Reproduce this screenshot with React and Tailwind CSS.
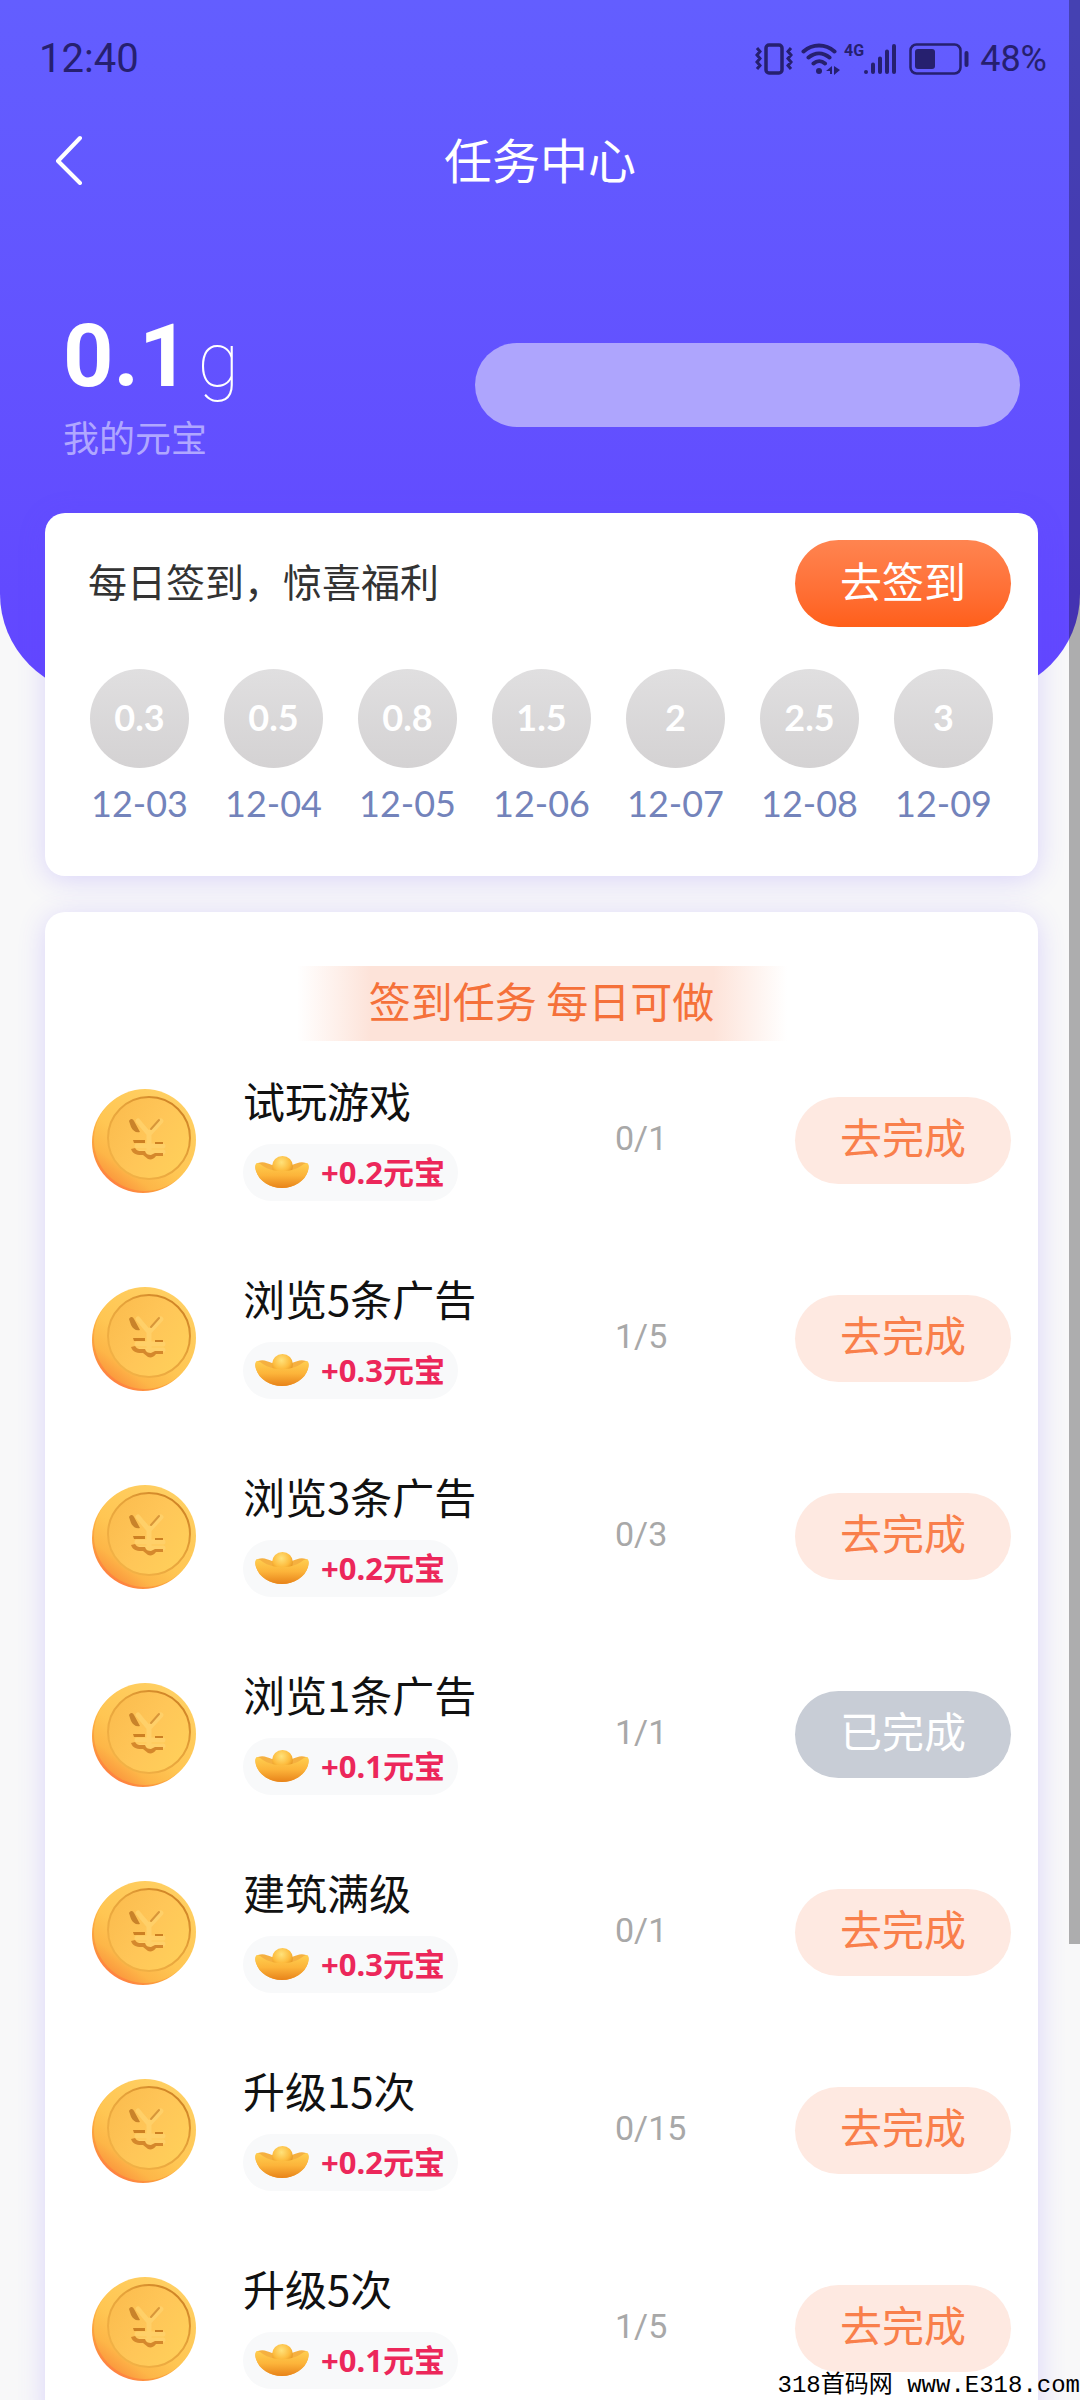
import React from 'react';
import clsx from 'clsx';

const signDays = [
    { date: '12-03', reward: '0.3' },
    { date: '12-04', reward: '0.5' },
    { date: '12-05', reward: '0.8' },
    { date: '12-06', reward: '1.5' },
    { date: '12-07', reward: '2' },
    { date: '12-08', reward: '2.5' },
    { date: '12-09', reward: '3' },
];

const tasks = [
    { name: '试玩游戏', reward: '0.2', progress: '0/1' },
    { name: '浏览5条广告', reward: '0.3', progress: '1/5' },
    { name: '浏览3条广告', reward: '0.2', progress: '0/3' },
    { name: '浏览1条广告', reward: '0.1', progress: '1/1', done: true },
    { name: '建筑满级', reward: '0.3', progress: '0/1' },
    { name: '升级15次', reward: '0.2', progress: '0/15' },
    { name: '升级5次', reward: '0.1', progress: '1/5' },
];

function StatusBar() {
    return (
        <div className="flex h-[118px] items-center justify-between pr-[33px] pl-[39px] font-[Roboto,sans-serif] text-[#26206f]">
            <span className="text-[40px]">12:40</span>
            <div className="flex items-center">
                {/* vibrate */}
                <svg className="mr-2" width="38" height="32" viewBox="0 0 38 32" fill="none" stroke="currentColor" strokeWidth="3">
                    <rect x="11" y="2" width="16" height="28" rx="3" strokeWidth="3.5" />
                    <path d="M2 5l3 3.5-3 3.5 3 3.5-3 3.5 3 3.5-3 3.5M36 5l-3 3.5 3 3.5-3 3.5 3 3.5-3 3.5 3 3.5" />
                </svg>
                {/* wifi */}
                <svg className="mr-1" width="39" height="32" viewBox="0 0 39 32" fill="none" stroke="currentColor" strokeWidth="4" strokeLinecap="round">
                    <path d="M2.500 8.500C11.500 .5 24.500 .5 33.500 8.500M7.500 14.500c6.500-5.500 14.500-5.500 21 0M12.500 20.500c3.500-3 8-3 11.500 0" />
                    <circle cx="18" cy="28" r="3" fill="currentColor" stroke="none" />
                    <path d="M25 28l6-5v8h-2v-3zM33 23v9l6-5z" fill="currentColor" stroke="none" />
                </svg>
                <span className="h-8 text-[16px] leading-[16px] font-bold">4G</span>
                {/* signal */}
                <svg className="mr-3" width="33" height="32" viewBox="0 0 33 32" fill="none" stroke="currentColor" strokeWidth="4" strokeLinecap="round">
                    <path d="M2 29v0M9 21.500V29M16 15.500V29M23 8.500V29M30 3V29" />
                </svg>
                {/* battery */}
                <svg className="mr-[11px]" width="60" height="32" viewBox="0 0 60 32" fill="none" stroke="currentColor">
                    <rect x="1.500" y="1.500" width="50" height="29" rx="6" strokeWidth="2.500" />
                    <rect x="6" y="6" width="20" height="20" rx="3" fill="currentColor" stroke="none" />
                    <path d="M57.500 10v12" strokeWidth="4" strokeLinecap="round" />
                </svg>
                <span className="text-[36px]">48%</span>
            </div>
        </div>
    );
}

function CoinIcon() {
    return (
        <svg className="h-[105px] w-[105px] shrink-0" viewBox="0 0 105 105" aria-hidden="true">
            <defs>
                <linearGradient id="coinEdge" x1="0.75" y1="0.1" x2="0.2" y2="0.9">
                    <stop offset="0" stopColor="#ffd25c" />
                    <stop offset="0.5" stopColor="#ffbe48" />
                    <stop offset="0.8" stopColor="#fb9f3c" />
                    <stop offset="1" stopColor="#ff8240" />
                </linearGradient>
                <linearGradient id="coinRim" x1="0.8" y1="0.1" x2="0.2" y2="0.9">
                    <stop offset="0" stopColor="#ffcf62" />
                    <stop offset="0.6" stopColor="#ffc653" />
                    <stop offset="0.85" stopColor="#fdb648" />
                    <stop offset="1" stopColor="#fb9a3e" />
                </linearGradient>
                <linearGradient id="coinFace" x1="0" y1="0.2" x2="1" y2="0.8">
                    <stop offset="0" stopColor="#fbbc4e" />
                    <stop offset="0.5" stopColor="#ffc658" />
                    <stop offset="1" stopColor="#ffd05a" />
                </linearGradient>
                <linearGradient id="coinGroove" x1="0.85" y1="0.1" x2="0.15" y2="0.9">
                    <stop offset="0" stopColor="#cf8326" />
                    <stop offset="0.4" stopColor="#e5a23a" />
                    <stop offset="1" stopColor="#f3b246" />
                </linearGradient>
            </defs>
            <ellipse cx="51" cy="54" rx="51" ry="51" fill="url(#coinEdge)" />
            <ellipse cx="53" cy="52" rx="51" ry="51" fill="url(#coinRim)" />
            <circle cx="57" cy="50" r="41" fill="url(#coinFace)" stroke="url(#coinGroove)" strokeWidth="2" />
            {/* embossed yuan sign: raised strokes, then their shaded left and lower sides */}
            <path d="M46 33l11 13 12-13M57 46v20M45 58h26M45 64h26" fill="none" stroke="#ffd069" strokeWidth="5" strokeLinecap="round" strokeLinejoin="round" />
            <path d="M37 33c2-3 4-2 5 0l6 11c-4 1-7-1-9-5z" fill="#c9832a" />
            <path d="M67 32l-8 9" stroke="#d8963a" strokeWidth="2" strokeLinecap="round" />
            <path d="M41 52h12v3H42zM63 54h8v2h-8z" fill="#cd8023" />
            <path d="M39 61l4-1c2 4 6 3 10 3 1 3 3 4 6 4l4-2h8v3h-7c-2 3-5 4-8 3l-5-4c-5 0-10 0-12-6z" fill="#d5882c" />
        </svg>
    );
}

function IngotIcon() {
    return (
        <svg className="h-8 w-[54px]" viewBox="0 0 54 32" aria-hidden="true">
            <defs>
                <linearGradient id="ingotBody" x1="0" y1="0" x2="0" y2="1">
                    <stop offset="0" stopColor="#ffcf50" />
                    <stop offset="0.5" stopColor="#fcb43a" />
                    <stop offset="1" stopColor="#e8831a" />
                </linearGradient>
                <radialGradient id="ingotBall" cx="0.45" cy="0.3" r="0.7">
                    <stop offset="0" stopColor="#ffe27a" />
                    <stop offset="0.6" stopColor="#fdbb3d" />
                    <stop offset="1" stopColor="#dd8a1c" />
                </radialGradient>
            </defs>
            <path d="M3 7c5-2 9 0 14 2h20c5-2 9-4 14-2 3 1 3 4 2 8-3 10-14 17-26 17S4 25 1 15c-1-4-1-7 2-8z" fill="#f5b040" />
            <circle cx="27.500" cy="10.500" r="10.500" fill="url(#ingotBall)" />
            <path d="M2 7c3 0 6 4 12 6 8 3 18 3 26 0 6-2 9-6 12-6 2 1 2 4 1 8-3 10-14 17-26 17S4 25 1 15C0 11 0 8 2 7z" fill="url(#ingotBody)" />
        </svg>
    );
}

function TaskRow({ task }) {
    return (
        <li className="flex h-[198px] items-center pr-[27px] pl-[47px]">
            <CoinIcon />
            <div className="ml-[46px] flex-1 pb-2">
                <h3 className="text-[42px] leading-[56px] text-[#111111]">{task.name}</h3>
                <div className="mt-4 inline-flex h-[57px] items-center rounded-full bg-[#f8f9fa] pr-[13px] pl-3 align-top">
                    <IngotIcon />
                    <span className="ml-3 font-['Noto_Sans','Noto_Sans_CJK_SC',sans-serif] text-[31px] leading-[40px] font-bold text-[#ec275a]">
                        +{task.reward}元宝
                    </span>
                </div>
            </div>
            <span className="w-[180px] pb-1 font-[Roboto,sans-serif] text-[34px] leading-[48px] text-[#a8a8a8]">{task.progress}</span>
            <button
                type="button"
                disabled={task.done}
                className={clsx(
                    'h-[87px] w-[216px] rounded-full pb-2 text-[42px] leading-[60px]',
                    task.done ? 'bg-[#c8cdd6] text-white' : 'bg-[#fee9e1] text-[#f97f4b]'
                )}
            >
                {task.done ? '已完成' : '去完成'}
            </button>
        </li>
    );
}

export default function App() {
    return (
        <div className="relative h-screen overflow-hidden bg-[#f8f8f9] font-['Noto_Sans_CJK_SC',sans-serif]">
            {/* HEADER */}
            <header className="rounded-b-[100px] bg-linear-to-b from-[#635eff] to-[#6246ff] pb-[234px] text-white">
                <StatusBar />
                <nav className="grid h-[84px] grid-cols-[1fr_auto_1fr] items-center px-[54px]">
                    <button type="button" aria-label="返回" className="w-8">
                        <svg width="30" height="50" viewBox="0 0 30 50" fill="none" stroke="currentColor" strokeWidth="4" strokeLinecap="round" strokeLinejoin="round">
                            <path d="M26 3L4 26l22 22" />
                        </svg>
                    </button>
                    <h1 className="pb-1 text-[48px] leading-[60px]">任务中心</h1>
                </nav>
                <div className="flex items-center justify-between pt-[108px] pr-[60px] pl-[63px]">
                    <div>
                        <p className="flex h-[92px] items-baseline font-[Roboto,sans-serif] leading-[92px]">
                            <span className="text-[88px] font-bold">0.1</span>
                            <span className="ml-2 text-[76px] font-thin">g</span>
                        </p>
                        <p className="mt-[10px] text-[36px] leading-[48px] text-[#b0a7ff]">我的元宝</p>
                    </div>
                    <div className="h-[84px] w-[57%] rounded-full bg-[#aea5fd]"></div>
                </div>
            </header>

            <main className="relative -mt-[181px] flex flex-col gap-9 pr-[42px] pl-[45px]">
                {/* DAILY SIGN-IN */}
                <section className="rounded-[20px] bg-white pt-[27px] pb-[49px] shadow-[0_4px_28px_rgba(98,72,255,0.2)]">
                    <div className="flex items-center justify-between pr-[27px] pl-[43px]">
                        <h2 className="pb-2 text-[39px] leading-[60px] text-[#333333]">每日签到，惊喜福利</h2>
                        <button type="button" className="h-[87px] w-[216px] rounded-full bg-linear-to-b from-[#ff8450] to-[#ff5f19] pb-2 text-[42px] leading-[60px] text-white">
                            去签到
                        </button>
                    </div>
                    <ul className="mt-[42px] flex justify-between px-[45px] font-[Lato,sans-serif] text-[36px] leading-[48px]">
                        {signDays.map(day => (
                            <li key={day.date} className="flex w-[99px] flex-col items-center gap-[11px]">
                                <span className="flex h-[99px] w-[99px] items-center justify-center rounded-full bg-linear-to-b from-[#e0dfe0] to-[#d4d2d3] pb-1 font-bold text-white">
                                    {day.reward}
                                </span>
                                <span className="text-[#7383bb]">{day.date}</span>
                            </li>
                        ))}
                    </ul>
                </section>

                {/* TASKS */}
                <section className="rounded-[20px] bg-white pt-[54px] shadow-[0_4px_28px_rgba(98,72,255,0.2)]">
                    <h2 className="mx-auto flex h-[75px] w-[490px] justify-center bg-[linear-gradient(90deg,#ffffff,#fde3d9_15%,#fde3d9_85%,#ffffff)] pt-1 text-[42px] leading-[60px] text-[#f5713a]">
                        签到任务 每日可做
                    </h2>
                    <ul>
                        {tasks.map(task => (
                            <TaskRow key={task.name} task={task} />
                        ))}
                    </ul>
                </section>
            </main>

            {/* scroll indicator */}
            <div className="absolute top-0 right-0 h-[81%] w-[11px] bg-black/30"></div>

            <p className="absolute right-0 bottom-0 font-['Liberation_Mono','Noto_Sans_CJK_SC',monospace] text-[24px] leading-[28px] text-black">
                318首码网 www.E318.com
            </p>
        </div>
    );
}
